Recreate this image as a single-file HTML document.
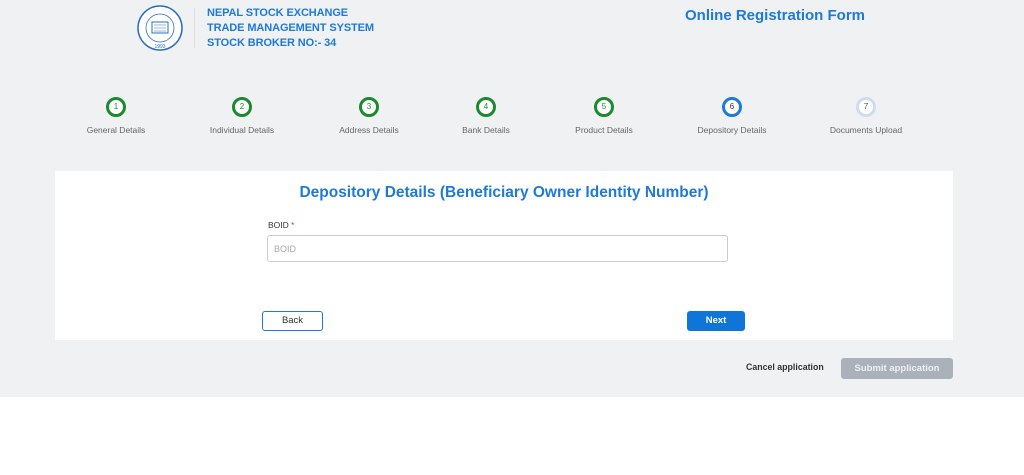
<!DOCTYPE html>
<html><head><style>
*{margin:0;padding:0;box-sizing:border-box}
body{width:1024px;height:475px;background:#fff;font-family:"Liberation Sans",Arial,sans-serif;position:relative;overflow:hidden}
#bg{position:absolute;left:0;top:0;width:1024px;height:397px;background:#f0f1f3}
.a{position:absolute}
.hdr{color:#1e7ad6;font-weight:bold;font-size:11px;line-height:15px;letter-spacing:-0.1px}
.step{position:absolute;top:97px;width:20px;height:20px;border-radius:50%;border:3px solid #1b8a2e;background:#fff;font-size:8px;line-height:14px;text-align:center;color:#1b8a2e}
.lbl{position:absolute;top:125px;font-size:8.5px;color:#666;width:140px;text-align:center}
</style></head><body>
<div id="bg"></div>
<svg class="a" style="left:136px;top:4px" width="48" height="48" viewBox="0 0 48 48">
<circle cx="24" cy="24" r="22" fill="#fff" stroke="#2a6fc0" stroke-width="1.5"/>
<circle cx="24" cy="24" r="14" fill="none" stroke="#2a6fc0" stroke-width="0.8"/>
<rect x="16" y="18" width="16" height="11" fill="none" stroke="#2a6fc0" stroke-width="1"/>
<path d="M18 21h12M18 24h12M18 27h12" stroke="#2a6fc0" stroke-width="0.6"/>
<text x="24" y="44" font-size="5" fill="#2a6fc0" text-anchor="middle">1993</text>
</svg>
<div class="a" style="left:194px;top:8px;width:1px;height:40px;background:#ddd"></div>
<div class="a hdr" style="left:207px;top:6px">NEPAL STOCK EXCHANGE<br>TRADE MANAGEMENT SYSTEM<br>STOCK BROKER NO:- 34</div>
<div class="a" style="left:685px;top:7px;color:#1e7ad6;font-weight:bold;font-size:15px">Online Registration Form</div>

<div class="step" style="left:106px">1</div><div class="lbl" style="left:46px">General Details</div>
<div class="step" style="left:232px">2</div><div class="lbl" style="left:172px">Individual Details</div>
<div class="step" style="left:359px">3</div><div class="lbl" style="left:299px">Address Details</div>
<div class="step" style="left:476px">4</div><div class="lbl" style="left:416px">Bank Details</div>
<div class="step" style="left:594px">5</div><div class="lbl" style="left:534px">Product Details</div>
<div class="step" style="left:722px;border-color:#1e7ad6;color:#333">6</div><div class="lbl" style="left:662px">Depository Details</div>
<div class="step" style="left:856px;border-color:#cfdcf0;color:#555">7</div><div class="lbl" style="left:796px">Documents Upload</div>

<div class="a" style="left:55px;top:171px;width:898px;height:169px;background:#fff"></div>
<div class="a" style="left:55px;top:184px;width:898px;text-align:center;color:#1e7ad6;font-weight:bold;font-size:15.5px">Depository Details (Beneficiary Owner Identity Number)</div>
<div class="a" style="left:268px;top:220px;font-size:8.5px;color:#333">BOID <span style="color:#d33">*</span></div>
<div class="a" style="left:267px;top:235px;width:461px;height:27px;border:1px solid #ccc;border-radius:3px;font-size:9px;color:#aaa;padding:8px 6px">BOID</div>
<div class="a" style="left:262px;top:311px;width:61px;height:20px;border:1px solid #1e7ad6;border-radius:3px;font-size:9.5px;color:#333;text-align:center;line-height:18px">Back</div>
<div class="a" style="left:687px;top:311px;width:58px;height:20px;background:#0f75d8;border-radius:3px;font-size:9.5px;color:#fff;text-align:center;line-height:20px;font-weight:bold">Next</div>
<div class="a" style="left:746px;top:362px;font-size:8.8px;color:#333;font-weight:bold">Cancel application</div>
<div class="a" style="left:841px;top:358px;width:112px;height:21px;background:#a9b1ba;border-radius:3px;font-size:9.5px;color:#eef0f2;text-align:center;line-height:21px;font-weight:bold">Submit application</div>
</body></html>
